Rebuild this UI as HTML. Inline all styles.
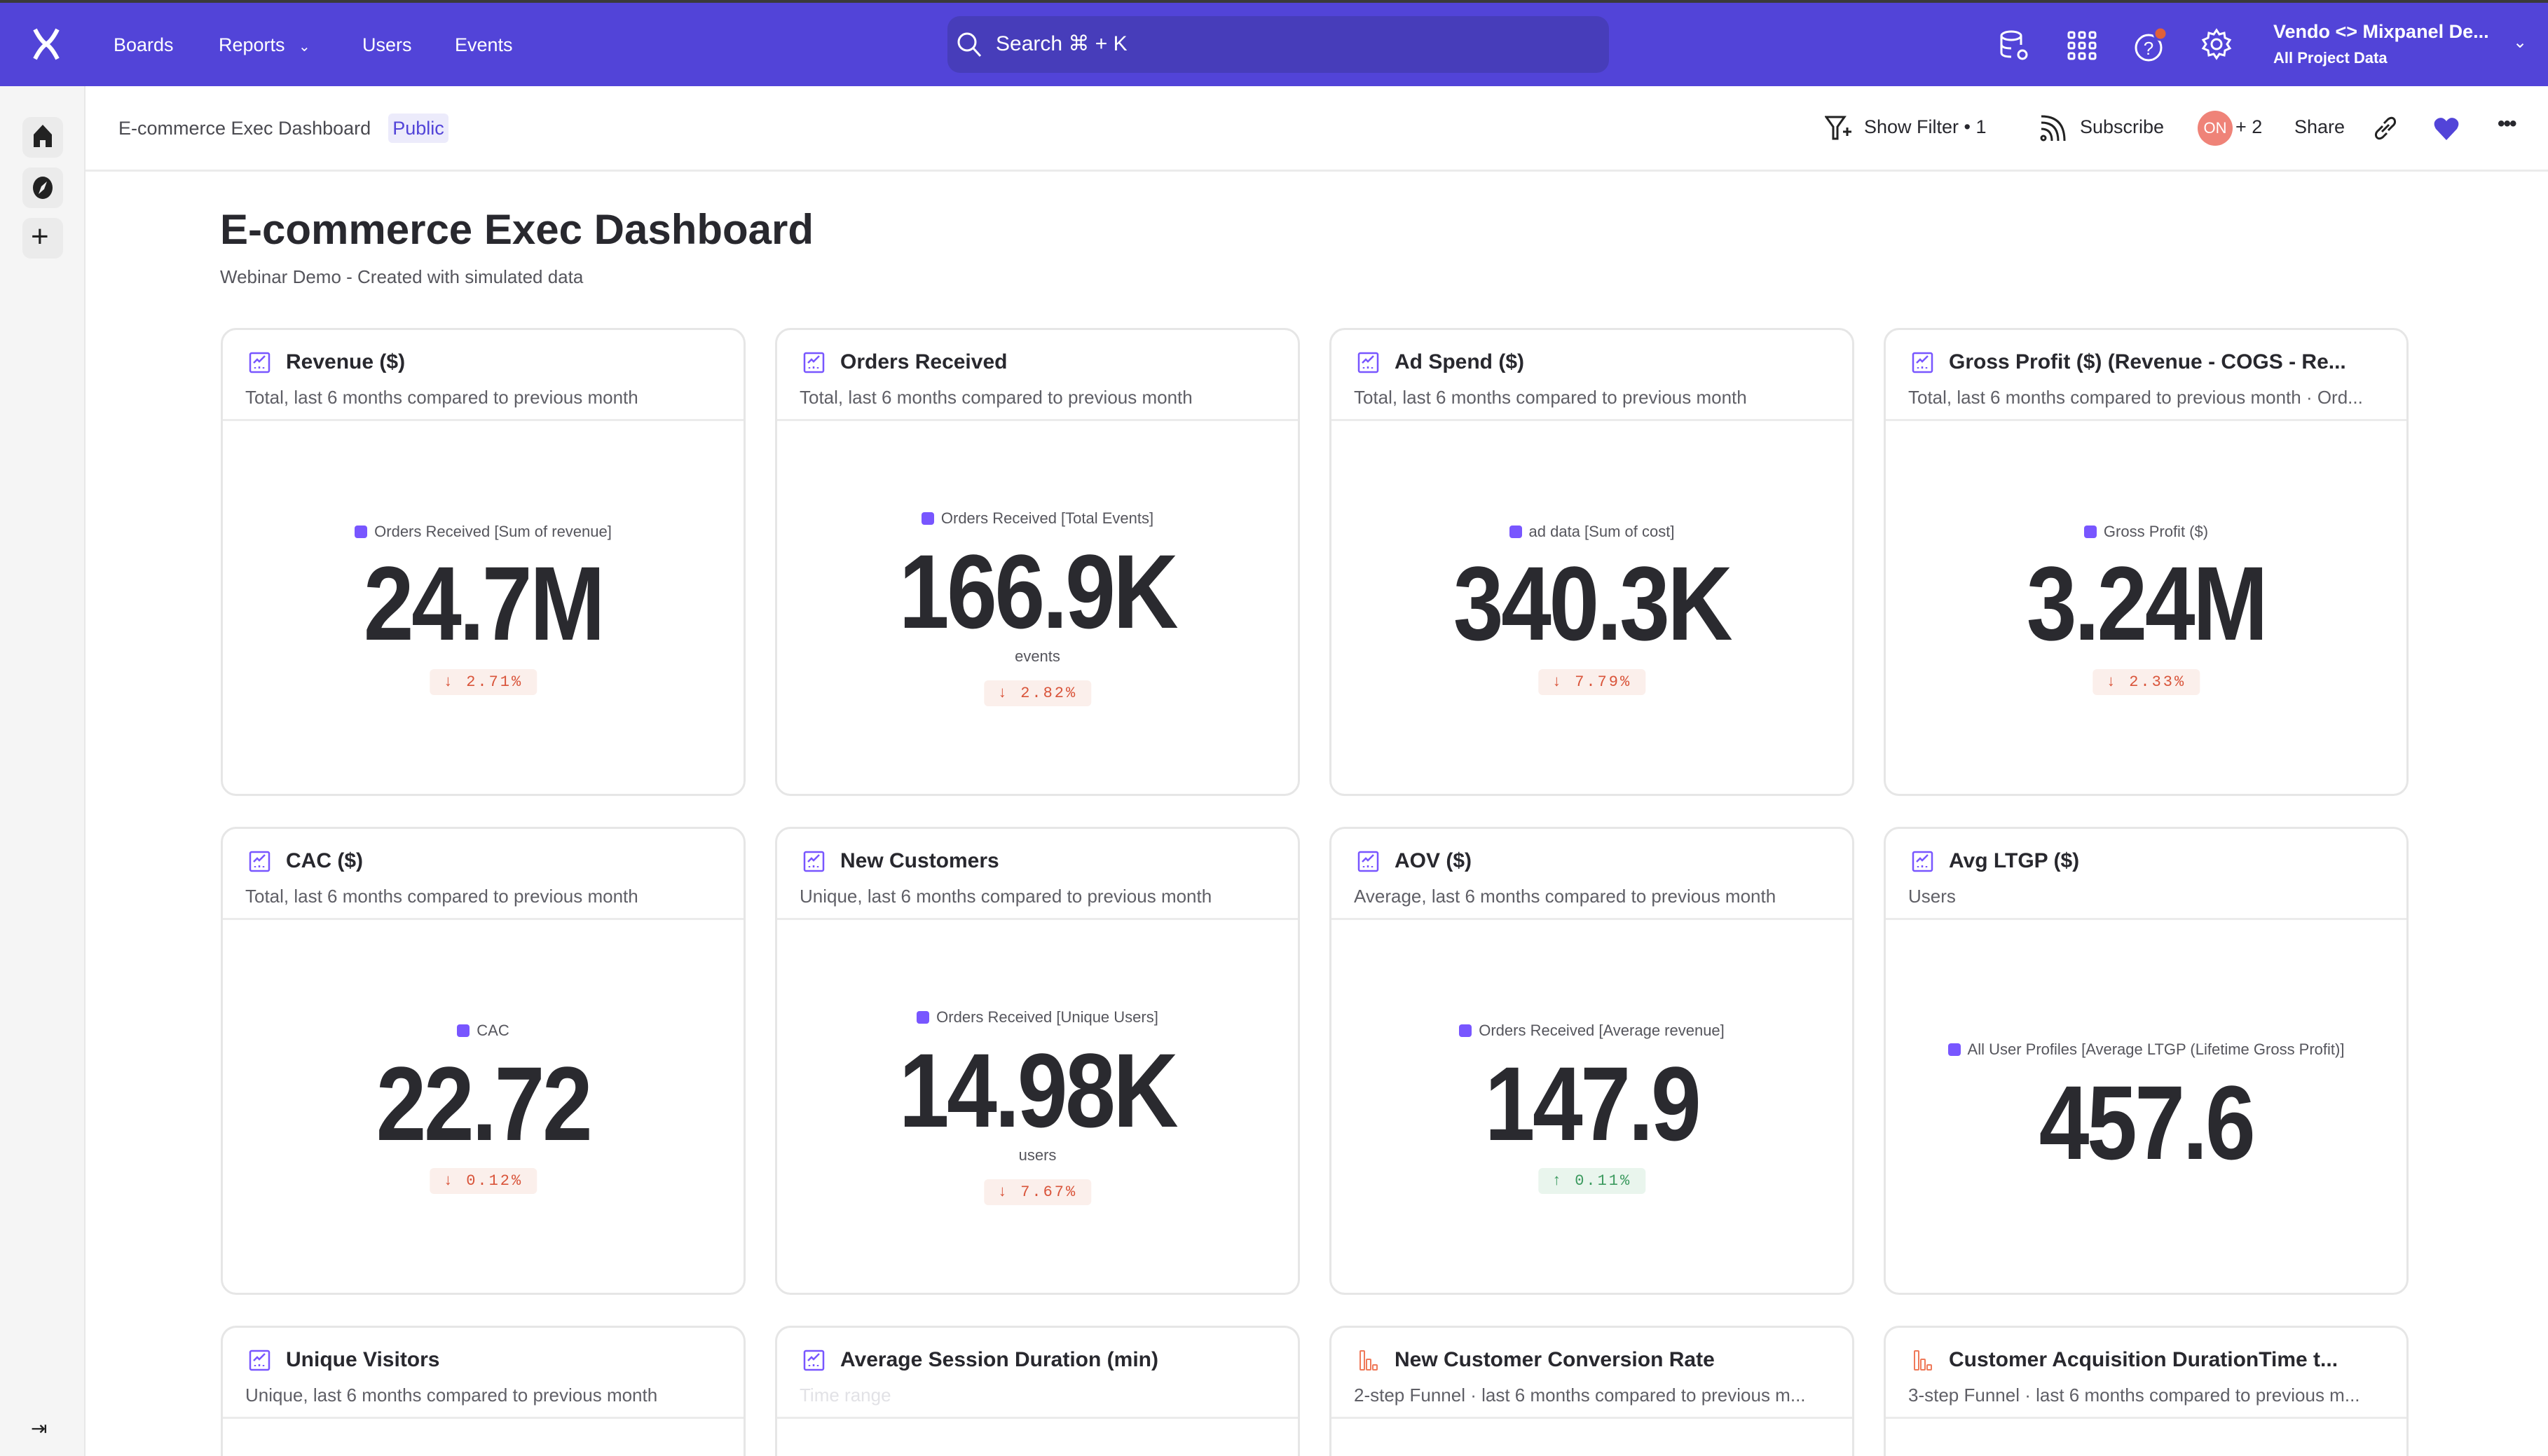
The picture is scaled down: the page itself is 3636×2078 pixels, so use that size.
<!DOCTYPE html>
<html style="width:3636px;height:2078px;overflow:hidden"><head><meta charset="utf-8"><style>
*{box-sizing:border-box;margin:0;padding:0}
body{width:3636px;height:2078px;overflow:hidden;background:#fff;font-family:"Liberation Sans",sans-serif;position:relative;color:#28282e}
.a{position:absolute}
.topline{left:0;top:0;width:3636px;height:4px;background:#3a3a3a}
.hdr{left:0;top:4px;width:3636px;height:119px;background:#5244d8}
.nav{color:#fff;font-size:27px;top:46px;line-height:36px}
.search{left:1352px;top:23px;width:944px;height:81px;background:#473dba;border-radius:18px}
.side{left:0;top:123px;width:122px;height:1955px;background:#f5f5f5;border-right:2px solid #e8e8e8}
.sbtn{left:32px;width:58px;height:58px;border-radius:12px;background:#ebebeb}
.sub{left:122px;top:123px;width:3514px;height:122px;border-bottom:3px solid #ebebeb;background:#fff}
.card{width:749px;height:668px;border:3px solid #e6e6e6;border-radius:22px;background:#fff;overflow:hidden}
.card .t{left:90px;top:28px;font-size:30px;font-weight:bold;line-height:36px;white-space:nowrap}
.card .s{left:32px;top:80px;font-size:26px;color:#5f5f66;line-height:32px;white-space:nowrap}
.card .d{left:0;top:127px;width:100%;height:3px;background:#ebebeb}
.card .ic{left:37px;top:31px;width:31px;height:31px}
.lg{left:0;width:100%;text-align:center;font-size:22px;color:#55555c;line-height:28px;white-space:nowrap}
.lg i{display:inline-block;width:18px;height:18px;background:#7856ff;border-radius:4px;vertical-align:-2px;margin-right:10px}
.num{left:0;width:100%;text-align:center;font-size:150px;font-weight:bold;line-height:150px;letter-spacing:-4px;transform:scaleX(0.86);color:#2a2a2f}
.un{left:0;width:100%;text-align:center;font-size:22px;color:#55555c;line-height:28px}
.bd{left:50%;transform:translateX(-50%);height:37px;line-height:37px;padding:0 20px;border-radius:6px;font-family:"Liberation Mono",monospace;font-size:22px;letter-spacing:3px;white-space:nowrap}
.dn{background:#fbefeb;color:#d9543a}
.up{background:#e9f5ed;color:#3c9a5f}
.r3{height:186px;border-bottom:none;border-radius:22px 22px 0 0}
</style></head><body>
<div class="a topline"></div>
<div class="a hdr"></div>
<svg class="a" style="left:44px;top:40px" width="44" height="46" viewBox="0 0 44 46"><path d="M6 2 Q14 18 22 23 Q30 18 38 2 M6 44 Q14 28 22 23 Q30 28 38 44" stroke="#fff" stroke-width="6" fill="none"/></svg>
<div class="a nav" style="left:162px">Boards</div>
<div class="a nav" style="left:312px">Reports <span style="font-size:20px;margin-left:12px">&#8964;</span></div>
<div class="a nav" style="left:517px">Users</div>
<div class="a nav" style="left:649px">Events</div>
<div class="a search"></div>
<svg class="a" style="left:1364px;top:44px" width="40" height="40" viewBox="0 0 40 40"><circle cx="16" cy="16" r="12" stroke="#fff" stroke-width="3" fill="none"/><path d="M25 25 L35 36" stroke="#fff" stroke-width="3"/></svg>
<div class="a nav" style="left:1421px;top:45px;font-size:30px">Search &#8984; + K</div>
<svg class="a" style="left:2852px;top:42px" width="46" height="48" viewBox="0 0 46 48" fill="none" stroke="#fff" stroke-width="3"><ellipse cx="18" cy="9" rx="14" ry="6"/><path d="M4 9 V33 Q4 39 18 39 M32 9 V22 M4 21 Q4 27 18 27"/><circle cx="34" cy="36" r="6"/></svg>
<svg class="a" style="left:2950px;top:44px" width="42" height="42" viewBox="0 0 42 42" fill="none" stroke="#fff" stroke-width="3"><rect x="2" y="2" width="8" height="8" rx="2"/><rect x="17" y="2" width="8" height="8" rx="2"/><rect x="32" y="2" width="8" height="8" rx="2"/><rect x="2" y="17" width="8" height="8" rx="2"/><rect x="17" y="17" width="8" height="8" rx="2"/><rect x="32" y="17" width="8" height="8" rx="2"/><rect x="2" y="32" width="8" height="8" rx="2"/><rect x="17" y="32" width="8" height="8" rx="2"/><rect x="32" y="32" width="8" height="8" rx="2"/></svg>
<svg class="a" style="left:3044px;top:36px" width="52" height="54" viewBox="0 0 52 54"><circle cx="22" cy="32" r="18" stroke="#fff" stroke-width="3" fill="none"/><text x="22" y="42" font-size="26" fill="#fff" text-anchor="middle" font-family="Liberation Sans">?</text><circle cx="39" cy="12" r="9" fill="#e0603a" stroke="#5244d8" stroke-width="3"/></svg>
<svg class="a" style="left:3140px;top:40px" width="46" height="46" viewBox="0 0 46 46" fill="none" stroke="#fff" stroke-width="3"><circle cx="23" cy="23" r="7"/><path d="M23 3 L27 9 L34 7 L35 14 L42 17 L38 23 L42 29 L35 32 L34 39 L27 37 L23 43 L19 37 L12 39 L11 32 L4 29 L8 23 L4 17 L11 14 L12 7 L19 9 Z"/></svg>
<div class="a" style="left:3244px;top:30px;color:#fff;font-size:27px;font-weight:bold;white-space:nowrap">Vendo &lt;&gt; Mixpanel De...</div>
<div class="a" style="left:3244px;top:70px;color:#fff;font-size:22px;font-weight:bold">All Project Data</div>
<div class="a" style="left:3586px;top:46px;color:#fff;font-size:24px">&#8964;</div>

<div class="a side"></div>
<div class="a sbtn" style="top:167px"></div>
<div class="a sbtn" style="top:239px"></div>
<div class="a sbtn" style="top:311px"></div>
<svg class="a" style="left:47px;top:176px" width="28" height="36" viewBox="0 0 28 36"><path d="M14 2 L27 16 V34 H18 V24 H10 V34 H1 V16 Z" fill="#222"/></svg>
<svg class="a" style="left:45px;top:250px" width="32" height="36" viewBox="0 0 32 36"><ellipse cx="16" cy="18" rx="14" ry="16" fill="#222"/><path d="M10 27 L14 16 L22 9 L18 20 Z" fill="#f0f0f0"/></svg>
<div class="a" style="left:44px;top:312px;font-size:44px;color:#222;line-height:52px">+</div>
<div class="a" style="left:44px;top:2022px;font-size:28px;color:#222">&#8677;</div>

<div class="a sub"></div>
<div class="a" style="left:169px;top:168px;font-size:27px;color:#4a4a50">E-commerce Exec Dashboard</div>
<div class="a" style="left:554px;top:162px;height:42px;width:86px;background:#ecebfb;border-radius:6px;color:#5244d8;font-size:27px;line-height:42px;text-align:center">Public</div>
<svg class="a" style="left:2604px;top:164px" width="40" height="38" viewBox="0 0 40 38" fill="none" stroke="#222" stroke-width="3"><path d="M2 3 H28 L18 17 V34 L12 34 V17 Z M26 24 H38 M32 18 V30"/></svg>
<div class="a" style="left:2660px;top:166px;font-size:27px;color:#28282e">Show Filter • 1</div>
<svg class="a" style="left:2910px;top:164px" width="38" height="40" viewBox="0 0 38 40" fill="none" stroke="#222" stroke-width="3"><circle cx="6" cy="33" r="3"/><path d="M3 20 Q18 20 18 37 M3 11 Q27 11 27 37 M3 2 Q36 2 36 37"/></svg>
<div class="a" style="left:2968px;top:166px;font-size:27px">Subscribe</div>
<div class="a" style="left:3136px;top:158px;width:50px;height:50px;border-radius:50%;background:#ef8378;color:#fff;font-size:22px;line-height:50px;text-align:center">ON</div>
<div class="a" style="left:3190px;top:166px;font-size:27px">+ 2</div>
<div class="a" style="left:3274px;top:166px;font-size:27px">Share</div>
<svg class="a" style="left:3388px;top:166px" width="32" height="34" viewBox="0 0 32 34" fill="none" stroke="#222" stroke-width="3"><path d="M14 10 L20 4 Q26 0 29 5 Q31 10 26 14 L20 20 M18 24 L12 30 Q6 34 3 29 Q1 24 6 20 L12 14 M11 22 L21 12"/></svg>
<svg class="a" style="left:3472px;top:166px" width="38" height="36" viewBox="0 0 38 36"><path d="M19 34 L4 18 Q-2 8 7 3 Q14 0 19 7 Q24 0 31 3 Q40 8 34 18 Z" fill="#5244d8"/></svg>
<div class="a" style="left:3564px;top:160px;font-size:30px;font-weight:bold;letter-spacing:-2px">•••</div>

<div class="a" style="left:314px;top:292px;font-size:60px;font-weight:bold;line-height:72px;color:#28282e">E-commerce Exec Dashboard</div>
<div class="a" style="left:314px;top:380px;font-size:26px;color:#55555c">Webinar Demo - Created with simulated data</div>

<!-- Row 1 -->
<div class="a card" style="left:315px;top:468px">
<svg class="a ic" viewBox="0 0 31 31" fill="none" stroke="#7856ff" stroke-width="2.5"><rect x="2" y="2" width="27" height="27" rx="2"/><path d="M7 16 L12 11 L15 14 L23 6 M9 24 V22 M15 24 V21 M21 24 V22"/></svg>
<div class="a t">Revenue ($)</div><div class="a s">Total, last 6 months compared to previous month</div><div class="a d"></div>
<div class="a lg" style="top:274px"><i></i>Orders Received [Sum of revenue]</div>
<div class="a num" style="top:315px">24.7M</div>
<div class="a bd dn" style="top:484px">↓ 2.71%</div></div>

<div class="a card" style="left:1106px;top:468px">
<svg class="a ic" viewBox="0 0 31 31" fill="none" stroke="#7856ff" stroke-width="2.5"><rect x="2" y="2" width="27" height="27" rx="2"/><path d="M7 16 L12 11 L15 14 L23 6 M9 24 V22 M15 24 V21 M21 24 V22"/></svg>
<div class="a t">Orders Received</div><div class="a s">Total, last 6 months compared to previous month</div><div class="a d"></div>
<div class="a lg" style="top:255px"><i></i>Orders Received [Total Events]</div>
<div class="a num" style="top:298px">166.9K</div>
<div class="a un" style="top:452px">events</div>
<div class="a bd dn" style="top:500px">↓ 2.82%</div></div>

<div class="a card" style="left:1897px;top:468px">
<svg class="a ic" viewBox="0 0 31 31" fill="none" stroke="#7856ff" stroke-width="2.5"><rect x="2" y="2" width="27" height="27" rx="2"/><path d="M7 16 L12 11 L15 14 L23 6 M9 24 V22 M15 24 V21 M21 24 V22"/></svg>
<div class="a t">Ad Spend ($)</div><div class="a s">Total, last 6 months compared to previous month</div><div class="a d"></div>
<div class="a lg" style="top:274px"><i></i>ad data [Sum of cost]</div>
<div class="a num" style="top:315px">340.3K</div>
<div class="a bd dn" style="top:484px">↓ 7.79%</div></div>

<div class="a card" style="left:2688px;top:468px">
<svg class="a ic" viewBox="0 0 31 31" fill="none" stroke="#7856ff" stroke-width="2.5"><rect x="2" y="2" width="27" height="27" rx="2"/><path d="M7 16 L12 11 L15 14 L23 6 M9 24 V22 M15 24 V21 M21 24 V22"/></svg>
<div class="a t">Gross Profit ($) (Revenue - COGS - Re...</div><div class="a s">Total, last 6 months compared to previous month · Ord...</div><div class="a d"></div>
<div class="a lg" style="top:274px"><i></i>Gross Profit ($)</div>
<div class="a num" style="top:315px">3.24M</div>
<div class="a bd dn" style="top:484px">↓ 2.33%</div></div>

<!-- Row 2 -->
<div class="a card" style="left:315px;top:1180px">
<svg class="a ic" viewBox="0 0 31 31" fill="none" stroke="#7856ff" stroke-width="2.5"><rect x="2" y="2" width="27" height="27" rx="2"/><path d="M7 16 L12 11 L15 14 L23 6 M9 24 V22 M15 24 V21 M21 24 V22"/></svg>
<div class="a t">CAC ($)</div><div class="a s">Total, last 6 months compared to previous month</div><div class="a d"></div>
<div class="a lg" style="top:274px"><i></i>CAC</div>
<div class="a num" style="top:317px">22.72</div>
<div class="a bd dn" style="top:484px">↓ 0.12%</div></div>

<div class="a card" style="left:1106px;top:1180px">
<svg class="a ic" viewBox="0 0 31 31" fill="none" stroke="#7856ff" stroke-width="2.5"><rect x="2" y="2" width="27" height="27" rx="2"/><path d="M7 16 L12 11 L15 14 L23 6 M9 24 V22 M15 24 V21 M21 24 V22"/></svg>
<div class="a t">New Customers</div><div class="a s">Unique, last 6 months compared to previous month</div><div class="a d"></div>
<div class="a lg" style="top:255px"><i></i>Orders Received [Unique Users]</div>
<div class="a num" style="top:298px">14.98K</div>
<div class="a un" style="top:452px">users</div>
<div class="a bd dn" style="top:500px">↓ 7.67%</div></div>

<div class="a card" style="left:1897px;top:1180px">
<svg class="a ic" viewBox="0 0 31 31" fill="none" stroke="#7856ff" stroke-width="2.5"><rect x="2" y="2" width="27" height="27" rx="2"/><path d="M7 16 L12 11 L15 14 L23 6 M9 24 V22 M15 24 V21 M21 24 V22"/></svg>
<div class="a t">AOV ($)</div><div class="a s">Average, last 6 months compared to previous month</div><div class="a d"></div>
<div class="a lg" style="top:274px"><i></i>Orders Received [Average revenue]</div>
<div class="a num" style="top:317px">147.9</div>
<div class="a bd up" style="top:484px">↑ 0.11%</div></div>

<div class="a card" style="left:2688px;top:1180px">
<svg class="a ic" viewBox="0 0 31 31" fill="none" stroke="#7856ff" stroke-width="2.5"><rect x="2" y="2" width="27" height="27" rx="2"/><path d="M7 16 L12 11 L15 14 L23 6 M9 24 V22 M15 24 V21 M21 24 V22"/></svg>
<div class="a t">Avg LTGP ($)</div><div class="a s">Users</div><div class="a d"></div>
<div class="a lg" style="top:301px"><i></i>All User Profiles [Average LTGP (Lifetime Gross Profit)]</div>
<div class="a num" style="top:344px">457.6</div></div>

<!-- Row 3 -->
<div class="a card r3" style="left:315px;top:1892px">
<svg class="a ic" viewBox="0 0 31 31" fill="none" stroke="#7856ff" stroke-width="2.5"><rect x="2" y="2" width="27" height="27" rx="2"/><path d="M7 16 L12 11 L15 14 L23 6 M9 24 V22 M15 24 V21 M21 24 V22"/></svg>
<div class="a t">Unique Visitors</div><div class="a s">Unique, last 6 months compared to previous month</div><div class="a d"></div></div>

<div class="a card r3" style="left:1106px;top:1892px">
<svg class="a ic" viewBox="0 0 31 31" fill="none" stroke="#7856ff" stroke-width="2.5"><rect x="2" y="2" width="27" height="27" rx="2"/><path d="M7 16 L12 11 L15 14 L23 6 M9 24 V22 M15 24 V21 M21 24 V22"/></svg>
<div class="a t">Average Session Duration (min)</div><div class="a s" style="color:#e2e2e6">Time range</div><div class="a d"></div></div>

<div class="a card r3" style="left:1897px;top:1892px">
<svg class="a ic" viewBox="0 0 31 31" fill="none" stroke="#ef7a5a" stroke-width="2"><rect x="4" y="2" width="6" height="27" rx="1"/><rect x="13" y="14" width="6" height="15" rx="1"/><rect x="22" y="22" width="6" height="7" rx="1"/></svg>
<div class="a t">New Customer Conversion Rate</div><div class="a s">2-step Funnel · last 6 months compared to previous m...</div><div class="a d"></div></div>

<div class="a card r3" style="left:2688px;top:1892px">
<svg class="a ic" viewBox="0 0 31 31" fill="none" stroke="#ef7a5a" stroke-width="2"><rect x="4" y="2" width="6" height="27" rx="1"/><rect x="13" y="14" width="6" height="15" rx="1"/><rect x="22" y="22" width="6" height="7" rx="1"/></svg>
<div class="a t">Customer Acquisition DurationTime t...</div><div class="a s">3-step Funnel · last 6 months compared to previous m...</div><div class="a d"></div></div>
</body></html>
